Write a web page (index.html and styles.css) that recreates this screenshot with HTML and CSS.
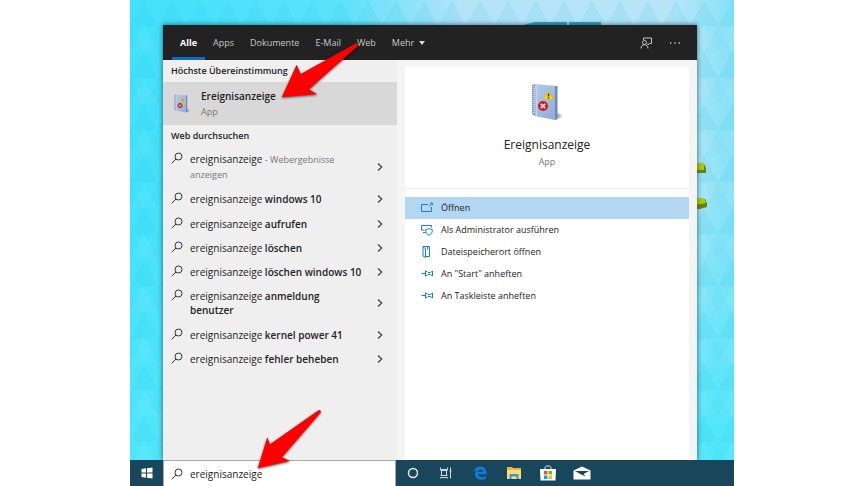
FILE: index.html
```html
<!DOCTYPE html>
<html lang="de">
<head>
    <meta charset="UTF-8">
    <meta name="viewport" content="width=device-width, initial-scale=1">
    <title>Ereignisanzeige</title>
    <link rel="stylesheet" href="styles.css">
</head>
<body>

<!-- shared icons -->
<svg class="sprite" aria-hidden="true">
    <defs>
        <linearGradient id="cover" x1="0" y1="0" x2="1" y2="1">
            <stop offset="0" stop-color="#b5cbe8"/>
            <stop offset="0.5" stop-color="#a3bde2"/>
            <stop offset="1" stop-color="#8eaad4"/>
        </linearGradient>
        <radialGradient id="ground">
            <stop offset="0" stop-color="#555" stop-opacity="0.8"/>
            <stop offset="1" stop-color="#555" stop-opacity="0"/>
        </radialGradient>
    </defs>
    <symbol id="search" viewBox="0 0 12 12">
        <circle cx="7.500" cy="4.500" r="3.500"/>
        <path d="M5 7L0.700 11.200"/>
    </symbol>
    <symbol id="chevron" viewBox="0 0 6 10">
        <path d="M1 1.500L4.700 5L1 8.500"/>
    </symbol>
    <symbol id="pin" viewBox="0 0 12 12">
        <path d="M0.500 5.500H4.500M4.500 2.500V8.500M4.500 3.500H6L7 4.500H9.500L11.500 3V8L9.500 6.500H7L6 7.500H4.500"/>
    </symbol>
    <symbol id="logbook" viewBox="0 0 32 40">
        <ellipse cx="25" cy="33" rx="7" ry="4" fill="url(#ground)"/>
        <path d="M1 2L4 1L26 3V36L24 37L4 33L1 31Z" fill="url(#cover)"/>
        <path d="M1 2L4 1V33L1 31Z" fill="#8fa5c8"/>
        <path d="M24 3L26.500 3V36L24 37Z" fill="#7189b8"/>
        <path d="M3 3V31" stroke="#d5e1f0" stroke-width="1.500" stroke-dasharray="1 1"/>
        <path d="M5.500 2V33" stroke="#c6d8ef" stroke-width="1"/>
        <path d="M17.500 7.500L22.500 16.500L12.500 16Z" fill="#ffd21c" stroke="#d9ae16" stroke-width="0.500"/>
        <path d="M17.500 10.500V13.500M17.500 14.500V15.500" stroke="#33300f" stroke-width="1.500"/>
        <circle cx="12" cy="23" r="5" fill="#c91f27"/>
        <path d="M9.800 20.800L14.200 25.200M14.200 20.800L9.800 25.200" stroke="#f6dcdc" stroke-width="1.700"/>
    </symbol>
</svg>

<div class="desktop">
    <svg class="wallpaper" aria-hidden="true">
        <defs>
            <linearGradient id="base" x1="0" y1="0" x2="1" y2="0">
                <stop offset="0" stop-color="#42e1fa"/>
                <stop offset="0.35" stop-color="#5ce2fb"/>
                <stop offset="0.55" stop-color="#b4e3f8"/>
                <stop offset="0.9" stop-color="#b8e5f8"/>
                <stop offset="1" stop-color="#84e2f6"/>
            </linearGradient>
            <linearGradient id="fade" x1="0" y1="0" x2="0" y2="1">
                <stop offset="0.4" stop-color="#50e6fa" stop-opacity="0"/>
                <stop offset="0.9" stop-color="#50e6fa"/>
            </linearGradient>
            <pattern id="triangles" width="28" height="52" patternUnits="userSpaceOnUse">
                <path d="M0 26L14 0L28 26Z" fill="#1fbfe6" opacity="0.1"/>
                <path d="M14 26L28 52H0Z" fill="#fff" opacity="0.06"/>
                <path d="M0 26L14 52L-14 52ZM28 26L42 52H14Z" fill="#1fbfe6" opacity="0.06"/>
            </pattern>
        </defs>
        <rect width="100%" height="100%" fill="url(#base)"/>
        <rect width="100%" height="100%" fill="url(#fade)"/>
        <rect width="100%" height="100%" fill="url(#triangles)"/>
        <path d="M393 25L405 22H437V25ZM439 22H471V25H439Z" fill="#2ba0bd"/>
        <path d="M565 164H574L576 168V173H565Z" fill="#6c8509"/>
        <path d="M565 163H574V170H565Z" fill="#a9cb12"/>
        <path d="M565 199H575L577 203V207L570 209H565Z" fill="#6c8509"/>
        <path d="M565 198H574L576 203L565 205Z" fill="#a9cb12"/>
    </svg>

    <div class="workspace">
        <section class="flyout">
            <header class="tabs">
                <nav>
                    <a class="active" href="#">Alle</a>
                    <a href="#">Apps</a>
                    <a href="#">Dokumente</a>
                    <a href="#">E-Mail</a>
                    <a href="#">Web</a>
                    <a href="#">Mehr <span class="caret"></span></a>
                </nav>
                <div class="tools">
                    <button aria-label="Feedback">
                        <svg width="12" height="12" viewBox="0 0 12 12">
                            <path d="M3.500 3V1H11.500V6.500H9.500L8 8V6.500"/>
                            <circle cx="4.500" cy="5.500" r="2"/>
                            <path d="M1 11.500C1 9 2.500 7.700 4.500 7.700S8 9 8 11.500"/>
                        </svg>
                    </button>
                    <button aria-label="Optionen">
                        <svg width="12" height="12" viewBox="0 0 12 12">
                            <path class="dots" d="M1 6H2.300M5.300 6H6.600M9.600 6H10.900"/>
                        </svg>
                    </button>
                </div>
            </header>

            <div class="panes">
                <div class="results">
                    <h2>Höchste Übereinstimmung</h2>
                    <a class="best" href="#">
                        <svg width="16" height="20"><use href="#logbook"/></svg>
                        <span>
                            <strong>Ereignisanzeige</strong>
                            <small>App</small>
                        </span>
                    </a>
                    <h2>Web durchsuchen</h2>
                    <ul>
                        <li><a href="#"><svg class="lens"><use href="#search"/></svg><span>ereignisanzeige <small>- Webergebnisse</small><br><small>anzeigen</small></span><svg class="more"><use href="#chevron"/></svg></a></li>
                        <li><a href="#"><svg class="lens"><use href="#search"/></svg><span>ereignisanzeige <b>windows 10</b></span><svg class="more"><use href="#chevron"/></svg></a></li>
                        <li><a href="#"><svg class="lens"><use href="#search"/></svg><span>ereignisanzeige <b>aufrufen</b></span><svg class="more"><use href="#chevron"/></svg></a></li>
                        <li><a href="#"><svg class="lens"><use href="#search"/></svg><span>ereignisanzeige <b>löschen</b></span><svg class="more"><use href="#chevron"/></svg></a></li>
                        <li><a href="#"><svg class="lens"><use href="#search"/></svg><span>ereignisanzeige <b>löschen windows 10</b></span><svg class="more"><use href="#chevron"/></svg></a></li>
                        <li><a href="#"><svg class="lens"><use href="#search"/></svg><span>ereignisanzeige <b>anmeldung</b><br><b>benutzer</b></span><svg class="more"><use href="#chevron"/></svg></a></li>
                        <li><a href="#"><svg class="lens"><use href="#search"/></svg><span>ereignisanzeige <b>kernel power 41</b></span><svg class="more"><use href="#chevron"/></svg></a></li>
                        <li><a href="#"><svg class="lens"><use href="#search"/></svg><span>ereignisanzeige <b>fehler beheben</b></span><svg class="more"><use href="#chevron"/></svg></a></li>
                    </ul>
                </div>

                <div class="preview">
                    <div class="card">
                        <div class="app">
                            <svg width="32" height="40"><use href="#logbook"/></svg>
                            <h1>Ereignisanzeige</h1>
                            <p>App</p>
                        </div>
                        <div class="actions">
                            <button class="selected">
                                <svg viewBox="0 0 12 12"><path d="M7 2.500H0.500V9.500H10.500V5M8 4.500L11 1.500M9 1.200H11.300V3.500"/></svg>
                                Öffnen
                            </button>
                            <button>
                                <svg viewBox="0 0 12 12"><path d="M3.500 6H0.500V1.500H10.500V3.500M2 8.500H4.500M8 4.500C9 5.300 10 5.500 11.300 5.500C11.500 8.500 10.500 10.300 8 11.300C5.500 10.300 4.500 8.500 4.700 5.500C6 5.500 7 5.300 8 4.500Z"/></svg>
                                Als Administrator ausführen
                            </button>
                            <button>
                                <svg viewBox="0 0 12 12"><path d="M2 0.500V10L4.500 11.500V3L2 0.500ZM2 0.500H8.500V10.500H4.500M6.500 0.500V3.500"/></svg>
                                Dateispeicherort öffnen
                            </button>
                            <button><svg><use href="#pin"/></svg>An "Start" anheften</button>
                            <button><svg><use href="#pin"/></svg>An Taskleiste anheften</button>
                        </div>
                    </div>
                </div>
            </div>
        </section>
    </div>

    <footer class="taskbar">
        <button class="start" aria-label="Start">
            <svg width="12" height="12" viewBox="0 0 12 12"><path fill="#fff" d="M0.500 2L5 1.300V5.500H0.500ZM6 1.200L11.500 0.400V5.500H6ZM0.500 6.500H5V10.700L0.500 10ZM6 6.500H11.500V11.600L6 10.800Z"/></svg>
        </button>
        <label class="searchbox">
            <svg class="lens"><use href="#search"/></svg>
            <input type="text" value="ereignisanzeige" aria-label="Suche">
        </label>
        <div class="apps">
            <button aria-label="Cortana">
                <svg width="12" height="12" viewBox="0 0 12 12"><circle cx="7" cy="6" r="4.500" fill="none" stroke="#e8eef1" stroke-width="1.500"/></svg>
            </button>
            <button aria-label="Taskansicht">
                <svg width="12" height="12" viewBox="0 0 12 12"><path d="M0.500 0.500V2.500H7.500V0.500M1.500 4V9M6.500 4V9M0.500 3.500H7.500M0.500 8.500H7.500M0.500 11.500V10.500H7.500V11.500M10.500 0.500V11.500M9.500 4H11.500" fill="none" stroke="#cfdae0"/></svg>
            </button>
            <button aria-label="Edge">
                <svg width="14" height="14" viewBox="0 0 14 14"><path fill="#0d7be0" d="M0.500 6.500C1.200 2.800 4 0.500 7.300 0.500C11.300 0.500 13.500 3.500 13.500 6.700V8.200H5C5.300 10.200 7 11.200 9.200 11.200C10.800 11.200 12 10.700 12.800 10.200V12.800C11.600 13.500 10.200 13.800 8.500 13.800C4.500 13.800 2 11.500 2 8.500C2 6.500 3 5 4.600 4.100C2.800 4.400 1.500 5.300 0.500 6.500ZM5.200 5.900H9.700C9.700 4.400 8.900 3.600 7.600 3.600C6.300 3.600 5.500 4.400 5.200 5.900Z"/></svg>
            </button>
            <button aria-label="Explorer">
                <svg width="16" height="14" viewBox="0 0 16 14">
                    <path d="M1 1H6L7 2H15V13H1Z" fill="#e9b845"/>
                    <path d="M1 4H15V13H1Z" fill="#fbdc79"/>
                    <path d="M3.500 13V8H12.500V13H10.500V10.500H5.500V13Z" fill="#3e95cf"/>
                </svg>
            </button>
            <button aria-label="Store">
                <svg width="16" height="16" viewBox="0 0 16 16">
                    <path d="M5 4V2.500C5 1.500 6 1 8 1S11 1.500 11 2.500V4" fill="none" stroke="#dfe8ec"/>
                    <path d="M0 4H16L15.500 15.500H0.500Z" fill="#fff"/>
                    <path d="M4 6H7.500V9.500H4Z" fill="#f25022"/>
                    <path d="M8.500 6H12V9.500H8.500Z" fill="#7fba00"/>
                    <path d="M4 10.500H7.500V14H4Z" fill="#00a4ef"/>
                    <path d="M8.500 10.500H12V14H8.500Z" fill="#ffb900"/>
                </svg>
            </button>
            <button aria-label="Mail">
                <svg width="18" height="14" viewBox="0 0 18 14">
                    <path d="M0.500 4.500L9 0.500L17.500 4.500V13.500H0.500Z" fill="#fff"/>
                    <path d="M2 5H16L10.500 8L13 10.500L8 8.500Z" fill="#1a465c"/>
                </svg>
            </button>
        </div>
    </footer>

    <svg class="arrow arrow-top" width="80" height="60" viewBox="0 0 80 60" aria-hidden="true">
        <path d="M0.700 56.300L15.700 23.700L19.700 33L75 2.300Q77.500 2 77 5L28 48.300L36.300 53.300Z"/>
    </svg>
    <svg class="arrow arrow-bottom" width="66" height="62" viewBox="0 0 66 62" aria-hidden="true">
        <path d="M0.700 60.300L10.300 29.300L13 36.300L61.500 2.200Q64.200 1.500 63.700 4.500L25 49.300L33 53Z"/>
    </svg>
</div>

</body>
</html>
```

FILE: styles.css
```css
* {
    box-sizing: border-box;
}

body {
    margin: 0;
    padding: 0 130px;
    background: #fff;
    color: #222;
    font-family: "Open Sans", "Noto Sans", sans-serif;
    font-size: 10px;
    line-height: 14px;
}

a {
    color: inherit;
    text-decoration: none;
}

button {
    border: 0;
    padding: 0;
    background: none;
    color: inherit;
    font: inherit;
}

h1, h2, p, ul {
    margin: 0;
    padding: 0;
}

svg {
    display: block;
    flex: none;
}

.sprite {
    position: absolute;
    width: 0;
    height: 0;
}

.desktop {
    position: relative;
    display: flex;
    flex-direction: column;
    min-height: 100vh;
    overflow: hidden;
}

.wallpaper {
    position: absolute;
    inset: 0;
    width: 100%;
    height: 100%;
}

.workspace {
    position: relative;
    flex: 1;
    display: flex;
    padding: 25px 37px 0 33px;
}

/* search flyout */

.flyout {
    flex: 1;
    display: flex;
    flex-direction: column;
    background: #f4f4f4;
    box-shadow: 0 0 5px rgba(0, 40, 60, 0.7);
}

.tabs {
    display: flex;
    justify-content: space-between;
    height: 35px;
    padding: 0 16px 0 9px;
    background: #222;
    color: #c8c8c8;
    font-size: 9px;
}

.tabs nav {
    display: flex;
}

.tabs a {
    display: flex;
    align-items: center;
    padding: 3px 8px 0;
    border-bottom: 3px solid transparent;
}

.tabs .active {
    border-color: #0f6cc4;
    color: #fff;
    font-weight: 700;
}

.caret {
    margin-left: 5px;
    border: 3px solid transparent;
    border-top: 4px solid #ddd;
    border-bottom: 0;
}

.tools {
    display: flex;
    align-items: center;
    gap: 17px;
}

.tools svg {
    fill: none;
    stroke: #c8c8c8;
}

.dots {
    stroke-width: 1.3px;
}

.panes {
    flex: 1;
    display: grid;
    grid-template-columns: 234px 1fr;
}

.results {
    background: #efefef;
}

.results h2 {
    padding: 4px 8px;
    font-size: 9px;
    font-weight: 600;
}

.best {
    display: flex;
    align-items: center;
    gap: 11px;
    height: 43px;
    padding: 0 11px;
    background: #d8d8d8;
}

.best strong,
.best small {
    display: block;
    font-size: 10px;
    font-weight: 600;
    line-height: 16px;
}

.best small,
.results li small {
    color: #777;
    font-size: 9px;
    font-weight: 400;
}

.results ul {
    display: flex;
    flex-direction: column;
    justify-content: space-between;
    min-height: 224px;
    list-style: none;
}

.results li a {
    display: flex;
    align-items: center;
    padding: 5px 14px 5px 8px;
}

.results li span {
    flex: 1;
    padding: 0 7px;
}

.results li b {
    font-weight: 600;
}

.lens {
    align-self: flex-start;
    width: 12px;
    height: 12px;
    fill: none;
    stroke: #333;
}

.more {
    width: 6px;
    height: 10px;
    fill: none;
    stroke: #444;
    stroke-width: 1.3px;
}

/* preview pane */

.preview {
    display: flex;
    padding: 7px 8px 0;
}

.card {
    flex: 1;
    background: #fff;
}

.app {
    display: flex;
    flex-direction: column;
    align-items: center;
    height: 122px;
    padding-top: 16px;
    border-bottom: 1px solid #eee;
}

.app h1 {
    margin-top: 14px;
    font-size: 12px;
    font-weight: 400;
    line-height: 16px;
}

.app p {
    margin-top: 2px;
    color: #777;
    font-size: 9px;
}

.actions {
    display: flex;
    flex-direction: column;
    padding-top: 8px;
}

.actions button {
    display: flex;
    align-items: center;
    gap: 8px;
    height: 22px;
    padding: 0 16px;
    font-size: 9px;
}

.actions .selected {
    background: #b3d6f2;
}

.actions svg {
    width: 12px;
    height: 12px;
    fill: none;
    stroke: #1580cf;
}

/* taskbar */

.taskbar {
    position: relative;
    display: flex;
    height: 26px;
    background: #1a465c;
}

.taskbar button {
    display: flex;
    align-items: center;
    justify-content: center;
    width: 32px;
}

.taskbar .start {
    width: 33px;
}

.searchbox {
    display: flex;
    align-items: center;
    gap: 7px;
    width: 233px;
    padding: 0 7px;
    border: 1px solid #aaa;
    border-bottom: 0;
    background: #fff;
}

.searchbox .lens {
    align-self: center;
}

.searchbox input {
    flex: 1;
    min-width: 0;
    border: 0;
    padding: 0;
    outline: 0;
    background: none;
    color: #222;
    font: inherit;
}

.apps {
    display: flex;
    gap: 2px;
}

/* red pointers over the desktop */

.arrow {
    position: absolute;
    fill: #fe0000;
    filter: drop-shadow(0 1px 1px rgba(0, 0, 0, 0.6));
}

.arrow-top {
    top: 41px;
    left: 151px;
}

.arrow-bottom {
    top: 408px;
    left: 127px;
}
```
